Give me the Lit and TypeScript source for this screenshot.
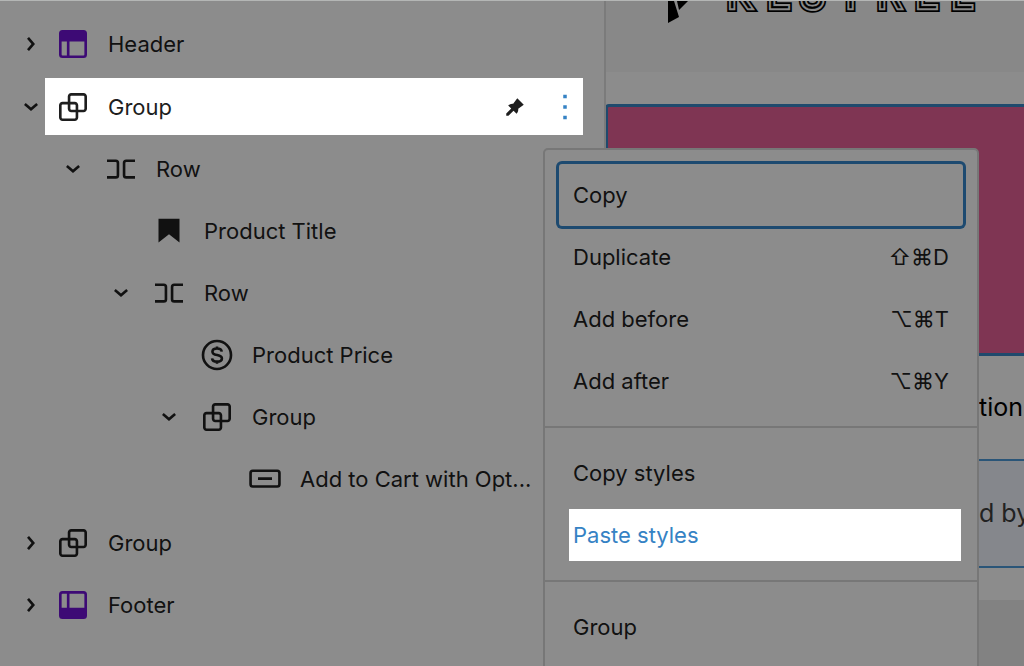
import { LitElement, html, css, svg } from "lit";
import { customElement } from "lit/decorators.js";
import { classMap } from "lit/directives/class-map.js";

const ICONS: Record<string, unknown> = {
  right: svg`<path d="M10.862 8.04l3.418 3.989-3.418 3.988-1.139-.976 2.582-3.012-2.582-3.012z"/>`,
  down: svg`<path d="m15.99 10.889-3.988 3.418-3.988-3.418.976-1.14 3.012 2.582 3.012-2.581.976 1.139Z"/>`,
  header: svg`<path fill-rule="evenodd" d="M18.5 10.5H10v8h8a.5.5 0 00.5-.5v-7.5zm-10 0h-3V18a.5.5 0 00.5.5h2.5v-8zM6 4h12a2 2 0 012 2v12a2 2 0 01-2 2H6a2 2 0 01-2-2V6a2 2 0 012-2z"/>`,
  footer: svg`<path fill-rule="evenodd" d="M18 5.5h-8v8h8.5V6a.5.5 0 00-.5-.5zm-9.5 8h-3V6a.5.5 0 01.5-.5h2.5v8zM6 4h12a2 2 0 012 2v12a2 2 0 01-2 2H6a2 2 0 01-2-2V6a2 2 0 012-2z"/>`,
  group: svg`<path d="M18 4h-7c-1.1 0-2 .9-2 2v3H6c-1.1 0-2 .9-2 2v7c0 1.1.9 2 2 2h7c1.1 0 2-.9 2-2v-3h3c1.1 0 2-.9 2-2V6c0-1.1-.9-2-2-2zm-4.5 14c0 .3-.2.5-.5.5H6c-.3 0-.5-.2-.5-.5v-7c0-.3.2-.5.5-.5h3V13c0 1.1.9 2 2 2h2.5v3zm0-4.5H11c-.3 0-.5-.2-.5-.5v-2.5H13c.3 0 .5.2.5.5v2.5zm5-.5c0 .3-.2.5-.5.5h-3V11c0-1.1-.9-2-2-2h-2.5V6c0-.3.2-.5.5-.5h7c.3 0 .5.2.5.5v7z"/>`,
  row: svg`<path d="M4 6.5h5a2 2 0 0 1 2 2v7a2 2 0 0 1-2 2H4V16h5a.5.5 0 0 0 .5-.5v-7A.5.5 0 0 0 9 8H4V6.5Zm16 0h-5a2 2 0 0 0-2 2v7a2 2 0 0 0 2 2h5V16h-5a.5.5 0 0 1-.5-.5v-7A.5.5 0 0 1 15 8h5V6.5Z"/>`,
  title: svg`<path d="M6 5v13.591l6-4.744 6 4.744V5H6Z"/>`,
  price: svg`<circle cx="12" cy="12" r="8" fill="none" stroke="currentColor" stroke-width="1.5"/><path d="M14.700 10.100c-.1-1-1.100-1.800-2.700-1.800s-2.600.7-2.600 1.800c0 2.700 5.400 1.200 5.400 3.900 0 1.100-1.100 1.800-2.800 1.800s-2.700-.8-2.800-1.900M12 7.100v1.500m0 6.900v1.500" fill="none" stroke="currentColor" stroke-width="1.500"/>`,
  button: svg`<path fill-rule="evenodd" d="M8 12.5h8V11H8v1.5Zm11-6H5a2 2 0 0 0-2 2V15a2 2 0 0 0 2 2h14a2 2 0 0 0 2-2V8.500a2 2 0 0 0-2-2ZM5 8h14a.5.5 0 0 1 .5.5V15a.5.5 0 0 1-.5.5H5a.5.5 0 0 1-.5-.5V8.500A.5.5 0 0 1 5 8Z"/>`,
  pin: svg`<path d="M10.97 10.159a3.382 3.382 0 0 0-2.857.955l1.724 1.723-2.836 2.913L7 17h1.250l2.913-2.837 1.723 1.723a3.380 3.380 0 0 0 .606-.825c.33-.63.446-1.343.35-2.032L17 10.695 13.305 7l-2.334 3.159Z"/>`,
  more: svg`<path d="M13 19h-2v-2h2v2zm0-6h-2v-2h2v2zm0-6h-2V5h2v2z"/>`,
};

const icon = (name: string) =>
  html`<svg class="icon" viewBox="0 0 24 24" fill="currentColor" aria-hidden="true">${ICONS[name]}</svg>`;

interface Block {
  label: string;
  icon: string;
  template?: boolean;
  selected?: boolean;
  collapsed?: boolean;
  children?: Block[];
}

const BLOCKS: Block[] = [
  { label: "Header", icon: "header", template: true, collapsed: true },
  {
    label: "Group", icon: "group", selected: true,
    children: [
      {
        label: "Row", icon: "row",
        children: [
          { label: "Product Title", icon: "title" },
          {
            label: "Row", icon: "row",
            children: [
              { label: "Product Price", icon: "price" },
              { label: "Group", icon: "group", children: [{ label: "Add to Cart with Opt...", icon: "button" }] },
            ],
          },
        ],
      },
    ],
  },
  { label: "Group", icon: "group", collapsed: true },
  { label: "Footer", icon: "footer", template: true, collapsed: true },
];

const base = css`
  :host { box-sizing: border-box; font-family: Inter, "Liberation Sans", sans-serif; font-size: 22px; line-height: 28px; color: #111; }
  * { box-sizing: border-box; }
  button { font: inherit; color: inherit; background: none; border: 0; margin: 0; padding: 0; text-align: left; cursor: pointer; }
  ul { list-style: none; margin: 0; padding: 0; }
  .icon { display: block; width: 42px; height: 42px; flex: none; }
`;

@customElement("block-tree")
export class BlockTree extends LitElement {
  static styles = [base, css`
    :host { display: block; }
    .tree { padding: 12px 0 0 10px; }
    .nested { padding-left: 42px; }
    .nested .nested { padding-left: 48px; }
    .nested .nested .nested { padding-bottom: 1px; }
    .row { display: flex; align-items: center; height: 62px; }
    .toggle, .spacer { flex: none; width: 42px; position: relative; z-index: 1; }
    .nested .toggle, .nested .spacer { margin-right: 6px; }
    .block { display: flex; align-items: center; gap: 14px; flex: 1; white-space: nowrap; }
    .template .block .icon { color: #3d0a75; }
    .selected { height: 57px; margin: 3px 21px 3px 0; }
    .main { display: flex; align-items: center; flex: 1; height: 100%; }
    .selected .main { background: #fff; color: #1e1e1e; margin-left: -7px; padding-left: 7px; }
    .pin { margin-right: 8px; }
    .more { color: #3582c4; margin-right: -3px; }
  `];

  private item(b: Block): unknown {
    const hasToggle = b.collapsed || b.children;
    return html`<li>
      <div class=${classMap({ row: true, selected: !!b.selected, template: !!b.template })}>
        ${hasToggle
          ? html`<button class="toggle" aria-label="Toggle ${b.label}" aria-expanded=${b.collapsed ? "false" : "true"}>${icon(b.collapsed ? "right" : "down")}</button>`
          : html`<span class="spacer"></span>`}
        <div class="main">
          <button class="block">${icon(b.icon)}<span>${b.label}</span></button>
          ${b.selected ? html`<span class="pin">${icon("pin")}</span><button class="more" aria-label="Options">${icon("more")}</button>` : ""}
        </div>
      </div>
      ${b.children ? html`<ul class="nested">${b.children.map((c) => this.item(c))}</ul>` : ""}
    </li>`;
  }

  render() {
    return html`<ul class="tree">${BLOCKS.map((b) => this.item(b))}</ul>`;
  }
}

interface Action { label: string; keys?: string; state?: string; }

const SECTIONS: Action[][] = [
  [
    { label: "Copy", state: "focused" },
    { label: "Duplicate", keys: "⇧⌘D" },
    { label: "Add before", keys: "⌥⌘T" },
    { label: "Add after", keys: "⌥⌘Y" },
  ],
  [{ label: "Copy styles" }, { label: "Paste styles", state: "lit" }],
  [{ label: "Group" }],
];

@customElement("block-menu")
export class BlockMenu extends LitElement {
  static styles = [base, css`
    :host { display: block; background: #8c8c8c; border: 2px solid #777; border-radius: 5px; }
    .section { display: flex; flex-direction: column; padding: 14px; }
    .section + .section { border-top: 2px solid #777; }
    .item { display: flex; align-items: center; justify-content: space-between; height: 62px; padding: 0 14px; border-radius: 3px; }
    .focused { box-shadow: 0 0 0 3px #1d4a70; }
    .lit { height: 52px; margin: 5px 2px 5px 10px; padding: 0 4px; background: #fff; color: #3582c4; border-radius: 0; }
  `];

  render() {
    return SECTIONS.map((s) => html`<div class="section" role="group">
      ${s.map((a) => html`<button class="item ${a.state ?? ""}" role="menuitem"><span>${a.label}</span>${a.keys ? html`<span>${a.keys}</span>` : ""}</button>`)}
    </div>`);
  }
}

@customElement("page-canvas")
export class PageCanvas extends LitElement {
  static styles = [base, css`
    :host { display: flex; flex-direction: column; border-left: 2px solid #7b7b7b; overflow: hidden; color: #000; }
    .masthead { flex: none; height: 71px; padding-left: 56px; background: #888; }
    .logo { display: block; width: 320px; height: 30px; }
    .name { font-family: Inter, sans-serif; font-size: 40px; font-weight: 200; }
    .cover { flex: none; height: 252px; margin: 32px -3px 0 -1px; background: #7f3553; border: 3px solid #1f4a6d; border-radius: 4px 0 0 0; }
    .line, .notice { flex: none; font-size: 25px; line-height: 32px; white-space: nowrap; }
    .line { padding: 35px 0 0 359px; height: 103px; }
    .notice { height: 109px; padding: 36px 0 0 373px; background: #85878c; border: solid #2a5578; border-width: 2px 0; color: #222; }
    .foot { flex: 1; margin-top: 32px; background: #828282; }
  `];

  render() {
    return html`
      <header class="masthead">
        <svg class="logo" viewBox="0 0 320 30" role="img" aria-label="Kestrel">
          <path d="M6 0H12L17 16 6 22ZM15 0H26L17 9Z"/>
          <defs><text id="name" class="name" y="7" x="65 105 138 176 215 253 289">KESTREL</text></defs>
          <use href="#name" fill="#000" stroke="#000" stroke-width="8"/>
          <use href="#name" fill="#888" stroke="#888" stroke-width="4.500"/>
          <use href="#name" fill="#000" stroke="#000" stroke-width="0.500"/>
        </svg>
      </header>
      <div class="cover"></div>
      <div class="line">ation</div>
      <div class="notice">d by</div>
      <div class="foot"></div>
    `;
  }
}

@customElement("app-root")
export class AppRoot extends LitElement {
  static styles = css`
    :host { display: block; }
    .app { position: relative; display: grid; grid-template-columns: 604px 1fr; box-sizing: border-box; height: 100vh; overflow: hidden; background: #8c8c8c; border-top: 1px solid #b4b6b5; }
    .menu { position: absolute; top: 147px; left: 543px; width: 436px; min-height: 560px; }
  `;

  render() {
    return html`<main class="app">
      <block-tree></block-tree>
      <page-canvas></page-canvas>
      <block-menu class="menu" role="menu"></block-menu>
    </main>`;
  }
}
